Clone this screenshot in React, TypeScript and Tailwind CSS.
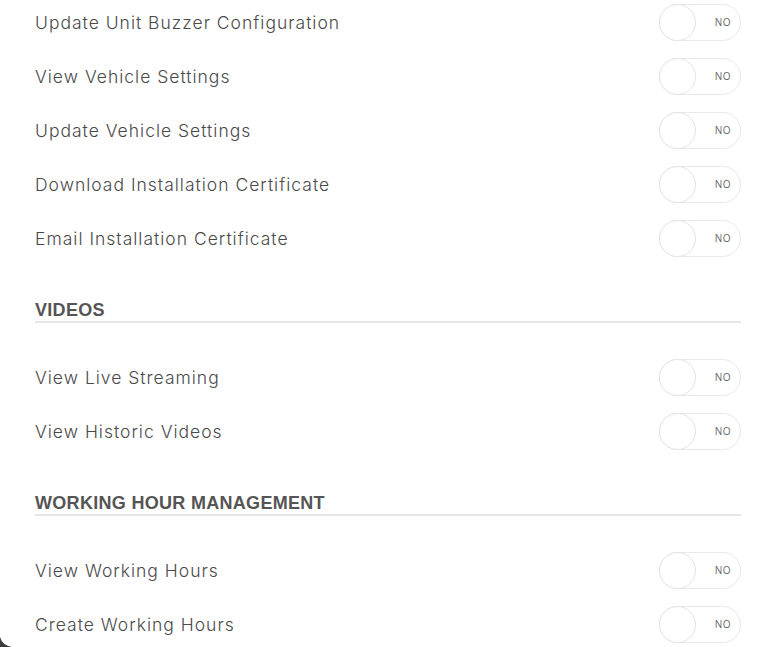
import React from "react";

type Section = { title?: string; items: string[] };

const sections: Section[] = [
  {
    items: [
      "Update Unit Buzzer Configuration",
      "View Vehicle Settings",
      "Update Vehicle Settings",
      "Download Installation Certificate",
      "Email Installation Certificate",
    ],
  },
  { title: "VIDEOS", items: ["View Live Streaming", "View Historic Videos"] },
  { title: "WORKING HOUR MANAGEMENT", items: ["View Working Hours", "Create Working Hours"] },
];

function Toggle() {
  return (
    <div className="relative flex h-[37px] w-[82px] shrink-0 items-center rounded-full border border-[#e8e8e8] bg-white">
      <div className="absolute -left-px -top-px h-[37px] w-[37px] rounded-full border border-[#e3e3e3] bg-white" />
      <span className="ml-auto mr-[9px] text-[10px] tracking-[0.5px] text-[#666] [font-family:'Open_Sans',sans-serif]">NO</span>
    </div>
  );
}

function Row({ label }: { label: string }) {
  return (
    <div className="flex h-[37px] items-center justify-between">
      <span className="pt-[2px] text-[17.5px] font-light tracking-[1px] text-[#4a4a4a] [font-family:Inter,sans-serif]">{label}</span>
      <Toggle />
    </div>
  );
}

export default function App() {
  return (
    <div className="relative h-[647px] w-full overflow-hidden bg-white">
      <div className="flex flex-col pl-[35px] pr-[34px] pt-[4px]">
        {sections.map((s, i) => (
          <div key={i} className={i === 0 ? "" : "mt-[42px]"}>
            {s.title && (
              <div className="mb-[36px] border-b-2 border-[#e6e6e6] pb-[2px] pt-[2px]">
                <div className="text-[18px] font-bold leading-[18px] tracking-[0.3px] text-[#555] [font-family:'Liberation_Sans',Arial,sans-serif]">
                  {s.title}
                </div>
              </div>
            )}
            <div className="flex flex-col gap-[17px]">
              {s.items.map((it) => (
                <Row key={it} label={it} />
              ))}
            </div>
          </div>
        ))}
      </div>
      <svg className="absolute bottom-0 left-0" width="12" height="10" viewBox="0 0 12 10">
        <path d="M0 0 Q2 8 12 10 L0 10 Z" fill="#3c3c3c" />
      </svg>
    </div>
  );
}
